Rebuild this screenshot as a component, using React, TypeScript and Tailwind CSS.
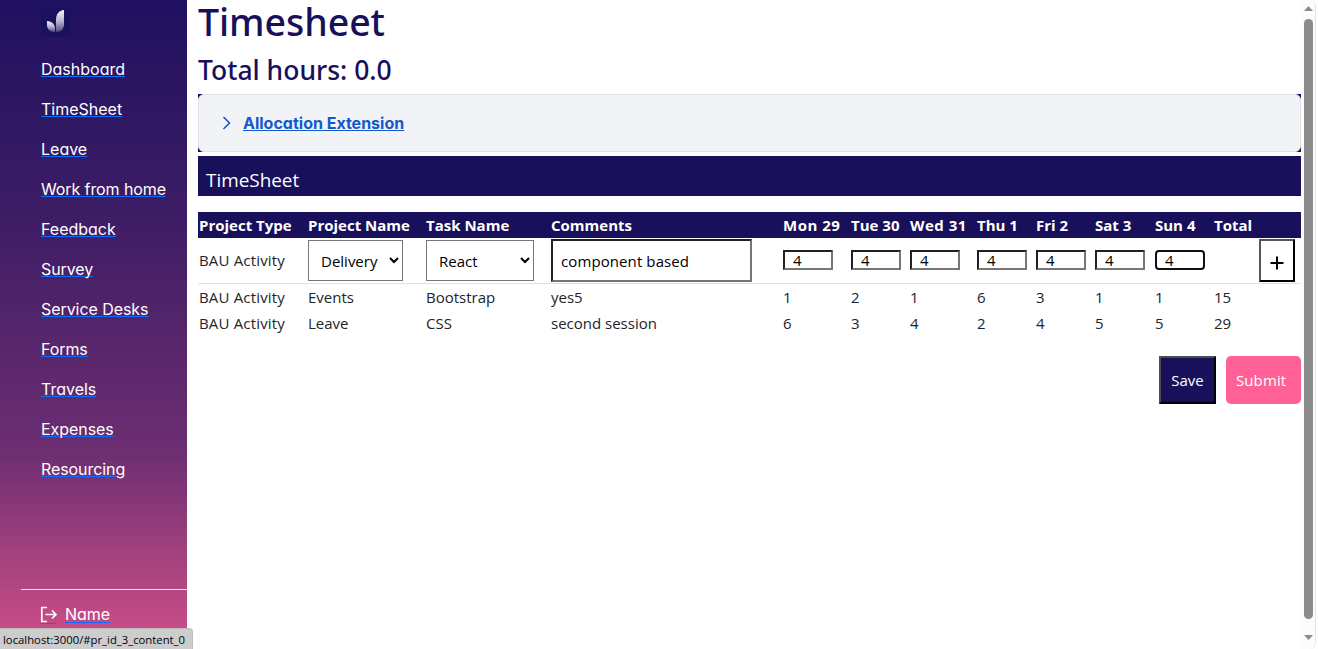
import React from "react";

const links: [string, string][] = [
  ["Dashboard", "tracking-[0px]"],
  ["TimeSheet", "tracking-[0px]"],
  ["Leave", "tracking-[0px]"],
  ["Work from home", "tracking-[-0.1px]"],
  ["Feedback", "tracking-[0px]"],
  ["Survey", "tracking-[-0.1px]"],
  ["Service Desks", "tracking-[-0.06px]"],
  ["Forms", "tracking-[-0.1px]"],
  ["Travels", "tracking-[0px]"],
  ["Expenses", "tracking-[-0.06px]"],
  ["Resourcing", "tracking-[-0.08px]"],
];

const headers = ["Project Type", "Project Name", "Task Name", "Comments", "Mon 29", "Tue 30", "Wed 31", "Thu 1", "Fri 2", "Sat 3", "Sun 4", "Total", ""];

const rows = [
  ["BAU Activity", "Events", "Bootstrap", "yes5", "1", "2", "1", "6", "3", "1", "1", "15", ""],
  ["BAU Activity", "Leave", "CSS", "second session", "6", "3", "4", "2", "4", "5", "5", "29", ""],
];

const grid = "grid grid-cols-[109px_118px_125px_232px_68px_59px_67px_59px_59px_60px_59px_45px_43px]";

function Logo() {
  return (
    <svg className="ml-[41px] mt-[7px] block bg-[#1b105e]" width="30" height="30" viewBox="0 0 30 30">
      <defs>
        <linearGradient id="leaf" x1="0" y1="0" x2="0" y2="1">
          <stop offset="0" stopColor="#f4f3f8" />
          <stop offset="0.500" stopColor="#b9b4cf" />
          <stop offset="1" stopColor="#4f467f" />
        </linearGradient>
      </defs>
      <path d="M23 3v14c0 5-3 8-8 8V13c0-6 3-9.500 8-10z" fill="url(#leaf)" />
      <path d="M6 14c5 .3 8 3.500 8 7.500V25c-5 0-8-3-8-7z" fill="url(#leaf)" />
    </svg>
  );
}

function Select({ value, className }: { value: string; className: string }) {
  return (
    <div className={`flex h-[41px] items-center justify-between border border-[#767676] bg-white pl-[12px] pr-[3px] text-black ${className}`}>
      <span className="pt-px">{value}</span>
      <svg width="10" height="7" viewBox="0 0 10 7">
        <path d="M1 1l4 4 4-4" fill="none" stroke="#000" strokeWidth="2" />
      </svg>
    </div>
  );
}

export default function App() {
  return (
    <div className="relative flex h-[649px] w-[1318px] overflow-hidden bg-white font-['Open_Sans',sans-serif] text-[15px] leading-[24px] text-[#212529]">
      <aside className="flex h-full w-[187px] shrink-0 flex-col bg-[linear-gradient(180deg,#1f1160_0%,#3c1c65_32%,#6e2e72_70%,#a8437f_87%,#d14f89_100%)] font-['Inter',sans-serif] text-[16px] text-white [font-feature-settings:'cv11']">
        <Logo />
        <nav className="mt-[20px] flex flex-col gap-[16px] pl-[41px]">
          {links.map(([label, tracking]) => (
            <div key={label} className="h-[24px]">
              <a className={`underline decoration-[#0d6efd] decoration-[1px] underline-offset-[1px] ${tracking}`}>{label}</a>
            </div>
          ))}
        </nav>
        <div className="ml-[21px] mt-[108px] flex border-t border-[#f5dcea] pl-[19px] pt-[12px]">
          <span className="mr-[7px] mt-[4px] h-[19px] w-[18px]">
            <svg width="18" height="19" viewBox="0 0 18 19" fill="none" stroke="#fff" strokeWidth="1.700">
              <path d="M7 1.500H1.800v14H7M5.500 8.500h10.500M12 4.500l4 4-4 4" />
              <path d="M1 17.500h16" stroke="#0d6efd" strokeWidth="1" />
            </svg>
          </span>
          <div className="h-[24px]">
            <a className="underline decoration-[#0d6efd] decoration-[1px] underline-offset-2">Name</a>
          </div>
        </div>
      </aside>

      <main className="ml-[11px] w-[1103px] shrink-0">
        <h1 className="h-[50px] whitespace-nowrap font-['Noto_Sans',sans-serif] text-[37.500px] font-medium leading-[44px] tracking-[-0.05px] text-[#19105b]">Timesheet</h1>
        <h2 className="h-[44px] whitespace-nowrap font-['Noto_Sans',sans-serif] text-[26.500px] font-medium leading-[41px] tracking-[0px] text-[#19105b]">Total hours: 0.0</h2>
        <div className="h-[58px] bg-[#19105b]">
          <div className="flex h-full items-center rounded-[6px] border border-[#e2e3e9] bg-[#f2f3f6] pl-[23px] font-['Inter',sans-serif] text-[16px] font-bold text-[#1259cf] [font-feature-settings:'cv11']">
            <svg width="10" height="14" viewBox="0 0 10 14" className="mr-[11px]">
              <path d="M1.500 1l6 6-6 6" fill="none" stroke="#1259cf" strokeWidth="1.600" />
            </svg>
            <span className="underline decoration-1 underline-offset-1">Allocation Extension</span>
          </div>
        </div>
        <div className="mt-[4px] h-[40px] bg-[#19105b] pl-[8px] pt-[12px] text-[18.900px] text-white">TimeSheet</div>

        <div className="mt-[16px]">
          <div className={`${grid} h-[26px] items-center bg-[#19105b] pl-px font-bold text-white`}>
            {headers.map((h, i) => (
              <span key={i} className={i === 4 || i === 6 ? "whitespace-nowrap tracking-[0.5px]" : "whitespace-nowrap"}>{h}</span>
            ))}
          </div>
          <div className={`${grid} h-[46px] items-center border-b border-[#dee2e6] pl-px`}>
            <span className="-mt-[2px] tracking-[0.17px]">BAU Activity</span>
            <Select value="Delivery" className="w-[95px]" />
            <Select value="React" className="w-[108px]" />
            <div className="h-[43px] w-[201px] border-2 border-b-[#767676] border-l-[#212121] border-r-[#767676] border-t-[#212121] pl-[8px] pt-[8px] tracking-[0.1px] text-black">component based</div>
            {headers.slice(4, 11).map((h) => (
              <div
                key={h}
                className={
                  h === "Sun 4"
                    ? "-mt-[2px] h-[20px] w-[50px] rounded-[4px] border-2 border-[#101010] pl-[8px] leading-[17px] text-black"
                    : "-mt-[2px] h-[20px] w-[50px] border-2 border-b-[#767676] border-l-[#212121] border-r-[#767676] border-t-[#212121] pl-[8px] leading-[17px] text-black"
                }
              >
                4
              </div>
            ))}
            <span />
            <div className="flex h-[43px] w-[36px] items-center justify-center border-2 border-b-black border-l-[#555] border-r-black border-t-[#555] pt-[4px]">
              <svg width="14" height="14" viewBox="0 0 14 14">
                <path d="M7 .5v13M.5 7h13" stroke="#000" strokeWidth="2" />
              </svg>
            </div>
          </div>
          {rows.map((row, r) => (
            <div key={r} className={`${grid} h-[26px] items-center pb-px pl-px`}>
              {row.map((cell, i) => (
                <span key={i} className={i === 0 ? "whitespace-nowrap tracking-[0.17px]" : "whitespace-nowrap"}>{cell}</span>
              ))}
            </div>
          ))}
        </div>

        <div className="mt-[20px] flex justify-end gap-[10px] text-white">
          <div className="flex h-[48px] w-[57px] items-center justify-center border-2 border-b-black border-l-[#4d4d4d] border-r-black border-t-[#4d4d4d] bg-[#19105b]">Save</div>
          <div className="flex h-[48px] w-[75px] items-center rounded-[5px] bg-[#ff6196] pl-[10px] tracking-[0.1px]">Submit</div>
        </div>
      </main>

      <div className="flex h-[649px] w-[15px] shrink-0 flex-col items-center rounded-r-[6px] border-r border-[#e4e4e4] bg-[#fcfcfc]">
        <svg width="9" height="5" viewBox="0 0 9 5" className="mt-[6px]"><path d="M0 5L4.500 0 9 5z" fill="#8b8b8b" /></svg>
        <div className="mt-[8px] h-[600px] w-[9px] rounded-full bg-[#8b8b8b]" />
        <svg width="9" height="5" viewBox="0 0 9 5" className="mt-[16px]"><path d="M0 0h9L4.500 5z" fill="#8b8b8b" /></svg>
      </div>

      <div className="absolute bottom-0 left-0 h-[21px] w-[193px] whitespace-nowrap rounded-tr-[4px] border-r border-t border-[#bdbdbd] bg-[#cdcdcd] pl-[3px] text-[11.300px] leading-[21px] text-black">localhost:3000/#pr_id_3_content_0</div>
    </div>
  );
}
